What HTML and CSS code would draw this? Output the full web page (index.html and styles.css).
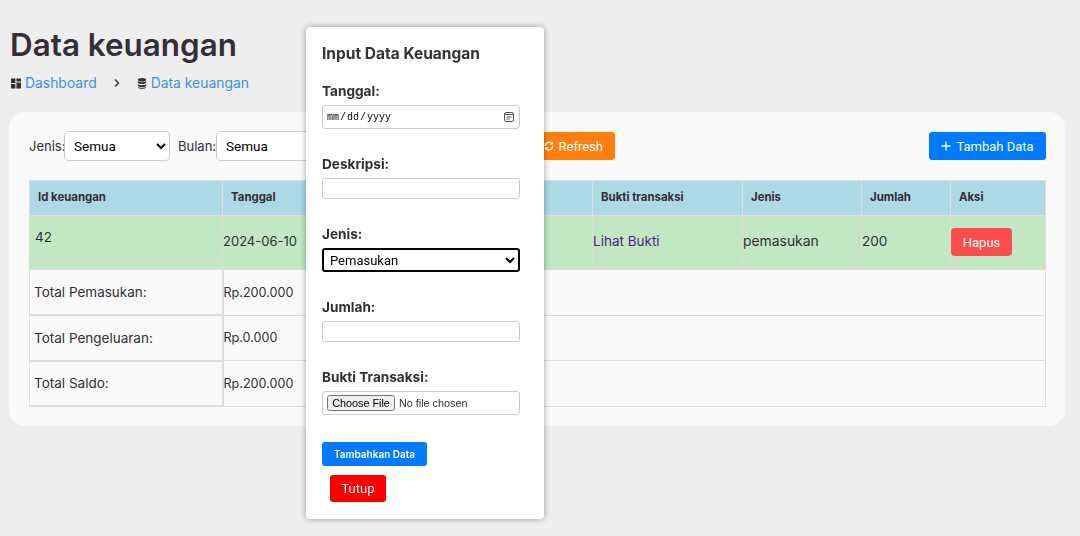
FILE: index.html
```html
<!DOCTYPE html>
<html lang="id">
<head>
    <meta charset="UTF-8">
    <meta name="viewport" content="width=device-width, initial-scale=1.0">
    <title>Data keuangan</title>
    <link rel="stylesheet" href="styles.css">
</head>
<body>
    <main class="content">
        <h1>Data keuangan</h1>
        <ul class="breadcrumb">
            <li>
                <svg class="crumb-icon" viewBox="0 0 10 10"><path d="M0 0h4.4v4.4H0zM5.4 0H10v3H5.4zM0 5.4h4.4V10H0zM5.4 4h4.6v6H5.4z"/></svg>
                <a href="#">Dashboard</a>
            </li>
            <li class="crumb-sep">
                <svg viewBox="0 0 8 10"><path d="M2 1.5 5.5 5 2 8.5" fill="none" stroke="currentColor" stroke-width="1.4"/></svg>
            </li>
            <li>
                <svg class="crumb-icon" viewBox="0 0 10 12"><ellipse cx="5" cy="2" rx="4.5" ry="1.9"/><path d="M.5 3.3C1.5 5 8.500 5 9.500 3.300V5.200C8.500 7 1.500 7 .5 5.200zM.5 6.500C1.500 8.200 8.500 8.200 9.500 6.500V8.400C8.500 10.200 1.500 10.200 .5 8.400zM.5 9.500C1.500 11 8.500 11 9.500 9.500V10C8.500 12.300 1.500 12.300 .5 10z"/></svg>
                <a href="#">Data keuangan</a>
            </li>
        </ul>

        <section class="panel">
            <div class="toolbar">
                <div class="filters">
                    <label class="label-type" for="jenis">Jenis:</label>
                    <select id="jenis"><option>Semua</option></select>
                    <label class="label-month" for="bulan">Bulan:</label>
                    <select id="bulan"><option>Semua</option></select>
                </div>
                <button class="btn btn-refresh">
                    <svg viewBox="0 0 12 12"><path d="M1.500 6A4.500 4.500 0 0 1 9.200 2.800M10.500 6A4.500 4.500 0 0 1 2.800 9.200" fill="none" stroke="currentColor" stroke-width="1.700"/><path d="M10.700.7v3.800H6.900zM1.300 11.300V7.500h3.800z" fill="currentColor"/></svg>
                    Refresh
                </button>
                <button class="btn btn-add">
                    <svg viewBox="0 0 10 10"><path d="M5 .5v9M.5 5h9" fill="none" stroke="currentColor" stroke-width="1.300"/></svg>
                    Tambah Data
                </button>
            </div>

            <table class="data-table">
                <colgroup>
                    <col class="col-id">
                    <col class="col-date">
                    <col class="col-desc">
                    <col class="col-proof">
                    <col class="col-type">
                    <col class="col-amount">
                    <col class="col-action">
                </colgroup>
                <thead>
                    <tr>
                        <th>Id keuangan</th>
                        <th>Tanggal</th>
                        <th>Deskripsi</th>
                        <th>Bukti transaksi</th>
                        <th>Jenis</th>
                        <th>Jumlah</th>
                        <th>Aksi</th>
                    </tr>
                </thead>
                <tbody>
                    <tr class="row-income">
                        <td class="cell-id"><div class="id-box">42</div></td>
                        <td class="cell-num">2024-06-10</td>
                        <td></td>
                        <td><a class="proof-link" href="#">Lihat Bukti</a></td>
                        <td class="cell-wide">pemasukan</td>
                        <td>200</td>
                        <td class="cell-action"><button class="btn btn-delete">Hapus</button></td>
                    </tr>
                    <tr class="row-total">
                        <td class="total-label">Total Pemasukan:</td>
                        <td class="cell-num" colspan="6">Rp.200.000</td>
                    </tr>
                    <tr class="row-total">
                        <td class="total-label">Total Pengeluaran:</td>
                        <td class="cell-num" colspan="6">Rp.0.000</td>
                    </tr>
                    <tr class="row-total">
                        <td class="total-label">Total Saldo:</td>
                        <td class="cell-num" colspan="6">Rp.200.000</td>
                    </tr>
                </tbody>
            </table>
        </section>
    </main>

    <div class="modal">
        <h2>Input Data Keuangan</h2>
        <form>
            <div class="field">
                <label for="tanggal">Tanggal:</label>
                <input class="input-date" type="date" id="tanggal">
            </div>
            <div class="field">
                <label for="deskripsi">Deskripsi:</label>
                <input class="input-text" type="text" id="deskripsi">
            </div>
            <div class="field">
                <label for="jenis-input">Jenis:</label>
                <select class="input-select" id="jenis-input"><option>Pemasukan</option></select>
            </div>
            <div class="field">
                <label for="jumlah">Jumlah:</label>
                <input class="input-text" type="text" id="jumlah">
            </div>
            <div class="field field-last">
                <label for="bukti">Bukti Transaksi:</label>
                <input class="input-file" type="file" id="bukti">
            </div>
            <button type="button" class="btn btn-submit">Tambahkan Data</button>
            <button type="button" class="btn btn-close">Tutup</button>
        </form>
    </div>
</body>
</html>
```

FILE: styles.css
```css
* {
    box-sizing: border-box;
}
body {
    margin: 0;
    height: 536px;
    overflow: hidden;
    background-color: #eeeeee;
    color: #342e37;
    font-family: "Inter", "Noto Sans", sans-serif;
}
a {
    text-decoration: none;
}
.content {
    padding: 26px 15px 0 9px;
}
h1 {
    margin: 0;
    font-size: 31.400px;
    line-height: 38px;
    font-weight: 600;
    padding-left: 1px;
}
.breadcrumb {
    display: flex;
    align-items: center;
    list-style: none;
    margin: 9px 0 0;
    padding: 0 0 0 2px;
    height: 20px;
    font-size: 13.900px;
}
.breadcrumb li {
    display: flex;
    align-items: center;
    gap: 4px;
}
.breadcrumb a {
    color: #3c91e6;
}
.crumb-icon {
    width: 10px;
    height: 11px;
    fill: #342e37;
}
.crumb-sep {
    margin: 0 16px;
}
.crumb-sep svg {
    width: 8px;
    height: 10px;
}
.panel {
    margin-top: 19px;
    height: 314px;
    padding: 19px 19px 0 20px;
    background-color: #f9f9f9;
    border-radius: 16px;
}
.toolbar {
    display: flex;
    align-items: center;
    height: 30px;
}
.filters {
    display: flex;
    align-items: center;
    font-size: 13px;
}
.label-type {
    width: 35px;
}
.label-month {
    width: 38px;
    margin-left: 8px;
}
.filters select {
    width: 106px;
    height: 30px;
    padding: 0 5px;
    background-color: #fff;
    border: 1px solid #ccc;
    border-radius: 4px;
    font-family: "Roboto", sans-serif;
    font-size: 13.500px;
}
.btn {
    border: none;
    color: #fff;
    font-family: "Roboto", sans-serif;
    font-size: 13px;
    border-radius: 3px;
    cursor: pointer;
}
.btn svg {
    width: 10px;
    height: 10px;
}
.btn-refresh {
    display: flex;
    align-items: center;
    gap: 5px;
    width: 100px;
    height: 28px;
    margin-left: 193px;
    justify-content: flex-end;
    padding: 0 12px 0 0;
    background-color: #ff7f0e;
}
.btn-add {
    display: flex;
    align-items: center;
    justify-content: center;
    gap: 5px;
    width: 117px;
    height: 28px;
    margin-left: auto;
    background-color: #007bff;
}
.data-table {
    width: 1016px;
    margin-top: 19px;
    table-layout: fixed;
    border-collapse: collapse;
    font-size: 13.500px;
}
.col-id { width: 193px; }
.col-date { width: 100px; }
.col-desc { width: 270px; }
.col-proof { width: 150px; }
.col-type { width: 119px; }
.col-amount { width: 89px; }
.col-action { width: 95px; }
.data-table th,
.data-table td {
    border: 1px solid #ddd;
    text-align: left;
}
.data-table th {
    height: 35px;
    padding: 0 8px 2px;
    background-color: #add8e6;
    font-size: 11.400px;
    font-weight: 700;
}
.data-table td {
    padding: 0;
}
.data-table .cell-num {
    font-size: 13px;
}
.data-table .row-total .cell-num {
    font-size: 12.600px;
}
.data-table .cell-wide {
    font-size: 13.900px;
}
.row-income td {
    height: 54px;
    background-color: #c3e6c3;
}
.data-table .row-income td {
    padding-bottom: 3px;
}
.data-table .row-income .cell-id {
    vertical-align: top;
    padding-bottom: 0;
}
.data-table .row-income .cell-action {
    padding-bottom: 1px;
}
.id-box {
    height: 45px;
    padding: 13px 5px 0;
    line-height: 16px;
    border-bottom: 1px solid #ddd;
}
.proof-link {
    color: #551a8b;
}
.btn-delete {
    height: 28px;
    width: 61px;
    background-color: #ff4d4d;
    border-radius: 4px;
    font-size: 13px;
}
.row-total td {
    height: 45.500px;
}
.data-table .total-label {
    padding-left: 4px;
    border-right-width: 2px;
    border-bottom-width: 2px;
}
.modal {
    position: fixed;
    left: 306px;
    top: 27px;
    width: 238px;
    height: 492px;
    padding: 17px 16px;
    background-color: #fff;
    border-radius: 4px;
    box-shadow: 0 0 6px rgba(0, 0, 0, 0.35);
}
.modal h2 {
    margin: 0 0 17px;
    font-size: 15.500px;
    line-height: 20px;
    font-weight: 700;
    color: #333;
}
.field {
    margin-bottom: 25px;
}
.field-last {
    margin-bottom: 27px;
}
.field label {
    display: block;
    height: 20px;
    line-height: 20px;
    margin-bottom: 4px;
    font-size: 13.600px;
    font-weight: 700;
}
.input-text,
.input-date,
.input-file,
.input-select {
    display: block;
    width: 198px;
    border: 1px solid #ccc;
    border-radius: 3px;
    background-color: #fff;
}
.input-text {
    height: 21px;
}
.input-date {
    height: 24px;
    padding: 0 3px;
    font-family: "Liberation Mono", monospace;
    font-size: 10px;
}
.input-date::-webkit-calendar-picker-indicator {
    width: 12px;
    height: 12px;
    padding: 0;
    margin: 0 1px 0 0;
    background: url("data:image/svg+xml,%3Csvg xmlns='http://www.w3.org/2000/svg' viewBox='0 0 12 12'%3E%3Crect x='1.500' y='1.500' width='9' height='9' rx='1.500' fill='none' stroke='%23555'/%3E%3Cpath d='M2 3.500h8M3.500 6h5M3.500 8h3' stroke='%23555'/%3E%3C/svg%3E") no-repeat center;
}
.input-select {
    height: 24px;
    padding: 0 2px;
    border: 2px solid #000;
    border-radius: 3px;
    font-family: "Roboto", sans-serif;
    font-size: 13px;
}
.input-file {
    height: 24px;
    padding: 3px 4px;
    font-family: "Liberation Sans", sans-serif;
    font-size: 10.800px;
}
.input-file::file-selector-button {
    width: 68px;
    height: 16px;
    padding: 0;
    margin-right: 4px;
}
.btn-submit {
    display: block;
    width: 105px;
    height: 24px;
    padding: 0;
    background-color: #007bff;
    font-family: "Inter", sans-serif;
    font-size: 10px;
    font-weight: 600;
}
.btn-close {
    display: block;
    width: 56px;
    height: 27px;
    margin: 9px 0 0 8px;
    padding: 0;
    background-color: #ff0000;
    font-size: 13px;
}
```
